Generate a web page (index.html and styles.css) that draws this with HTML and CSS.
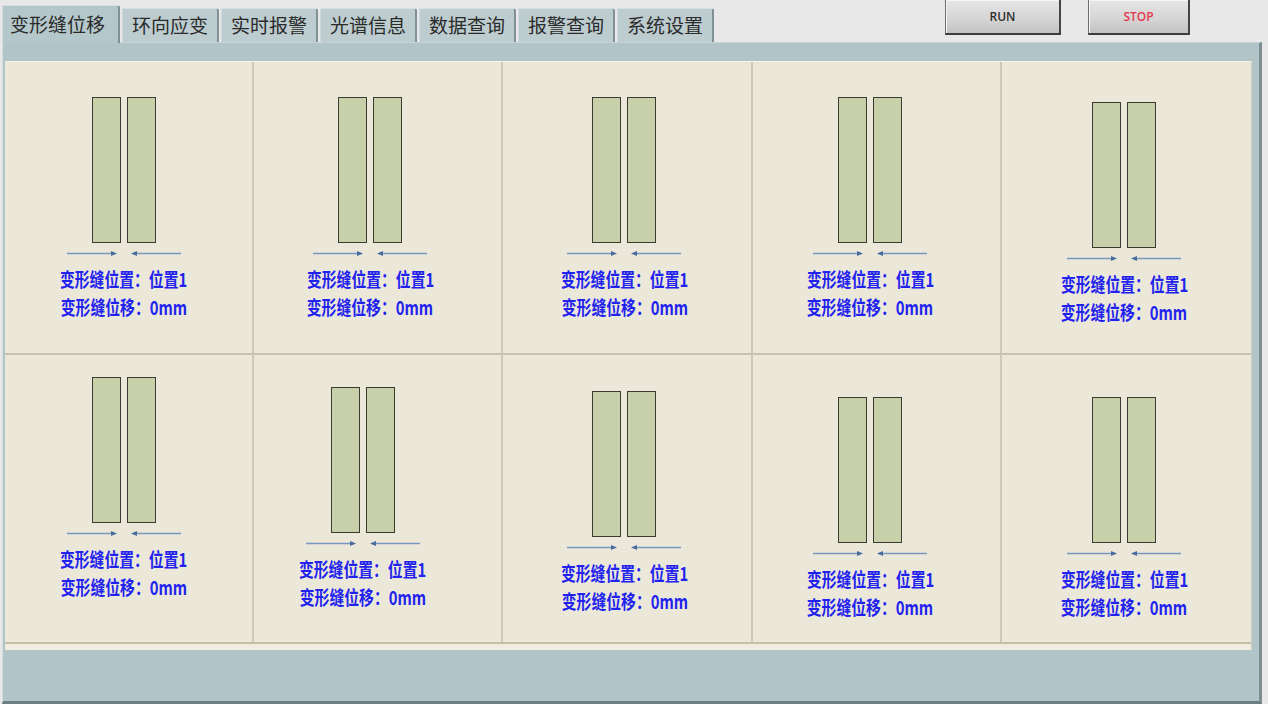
FILE: index.html
```html
<!DOCTYPE html>
<html lang="zh-CN">
<head>
    <meta charset="UTF-8">
    <meta name="viewport" content="width=device-width, initial-scale=1.0">
    <title>变形缝位移</title>
    <link rel="stylesheet" href="styles.css">
</head>
<body>
<!--  tab strip and run / stop keys  -->
<div class="header">
  <div class="tabs">
    <span class="tab active">变形缝位移</span>
    <span class="tab">环向应变</span>
    <span class="tab">实时报警</span>
    <span class="tab">光谱信息</span>
    <span class="tab">数据查询</span>
    <span class="tab">报警查询</span>
    <span class="tab">系统设置</span>
  </div>
  <div class="controls">
    <span class="btn run">RUN</span>
    <span class="btn stop">STOP</span>
  </div>
</div>

<div class="panel">
  <div class="board">
    <div class="grid">
<!--  first row of joints  -->
      <div class="joint c1 top">
        <div class="bars"><span class="bar"></span><span class="bar"></span></div>
        <svg class="arrows" width="114" height="9" viewBox="0 0 114 9"><line x1="0" y1="4.5" x2="48" y2="4.5"/><polygon points="44,2 50,4.5 44,7"/><line x1="66" y1="4.5" x2="114" y2="4.5"/><polygon points="70,2 64,4.5 70,7"/></svg>
        <div class="label">变形缝位置：位置1</div>
        <div class="label">变形缝位移：0mm</div>
      </div>
      <div class="joint c2 top">
        <div class="bars"><span class="bar"></span><span class="bar"></span></div>
        <svg class="arrows" width="114" height="9" viewBox="0 0 114 9"><line x1="0" y1="4.5" x2="48" y2="4.5"/><polygon points="44,2 50,4.5 44,7"/><line x1="66" y1="4.5" x2="114" y2="4.5"/><polygon points="70,2 64,4.5 70,7"/></svg>
        <div class="label">变形缝位置：位置1</div>
        <div class="label">变形缝位移：0mm</div>
      </div>
      <div class="joint c3 top">
        <div class="bars"><span class="bar"></span><span class="bar"></span></div>
        <svg class="arrows" width="114" height="9" viewBox="0 0 114 9"><line x1="0" y1="4.5" x2="48" y2="4.5"/><polygon points="44,2 50,4.5 44,7"/><line x1="66" y1="4.5" x2="114" y2="4.5"/><polygon points="70,2 64,4.5 70,7"/></svg>
        <div class="label">变形缝位置：位置1</div>
        <div class="label">变形缝位移：0mm</div>
      </div>
      <div class="joint c4 top">
        <div class="bars"><span class="bar"></span><span class="bar"></span></div>
        <svg class="arrows" width="114" height="9" viewBox="0 0 114 9"><line x1="0" y1="4.5" x2="48" y2="4.5"/><polygon points="44,2 50,4.5 44,7"/><line x1="66" y1="4.5" x2="114" y2="4.5"/><polygon points="70,2 64,4.5 70,7"/></svg>
        <div class="label">变形缝位置：位置1</div>
        <div class="label">变形缝位移：0mm</div>
      </div>
      <div class="joint c5 top low">
        <div class="bars"><span class="bar"></span><span class="bar"></span></div>
        <svg class="arrows" width="114" height="9" viewBox="0 0 114 9"><line x1="0" y1="4.5" x2="48" y2="4.5"/><polygon points="44,2 50,4.5 44,7"/><line x1="66" y1="4.5" x2="114" y2="4.5"/><polygon points="70,2 64,4.5 70,7"/></svg>
        <div class="label">变形缝位置：位置1</div>
        <div class="label">变形缝位移：0mm</div>
      </div>
<!--  second row of joints  -->
      <div class="joint c1 d22">
        <div class="bars"><span class="bar"></span><span class="bar"></span></div>
        <svg class="arrows" width="114" height="9" viewBox="0 0 114 9"><line x1="0" y1="4.5" x2="48" y2="4.5"/><polygon points="44,2 50,4.5 44,7"/><line x1="66" y1="4.5" x2="114" y2="4.5"/><polygon points="70,2 64,4.5 70,7"/></svg>
        <div class="label">变形缝位置：位置1</div>
        <div class="label">变形缝位移：0mm</div>
      </div>
      <div class="joint c2 wide d32">
        <div class="bars"><span class="bar"></span><span class="bar"></span></div>
        <svg class="arrows" width="114" height="9" viewBox="0 0 114 9"><line x1="0" y1="4.5" x2="48" y2="4.5"/><polygon points="44,2 50,4.5 44,7"/><line x1="66" y1="4.5" x2="114" y2="4.5"/><polygon points="70,2 64,4.5 70,7"/></svg>
        <div class="label">变形缝位置：位置1</div>
        <div class="label">变形缝位移：0mm</div>
      </div>
      <div class="joint c3 d36">
        <div class="bars"><span class="bar"></span><span class="bar"></span></div>
        <svg class="arrows" width="114" height="9" viewBox="0 0 114 9"><line x1="0" y1="4.5" x2="48" y2="4.5"/><polygon points="44,2 50,4.5 44,7"/><line x1="66" y1="4.5" x2="114" y2="4.5"/><polygon points="70,2 64,4.5 70,7"/></svg>
        <div class="label">变形缝位置：位置1</div>
        <div class="label">变形缝位移：0mm</div>
      </div>
      <div class="joint c4 d42">
        <div class="bars"><span class="bar"></span><span class="bar"></span></div>
        <svg class="arrows" width="114" height="9" viewBox="0 0 114 9"><line x1="0" y1="4.5" x2="48" y2="4.5"/><polygon points="44,2 50,4.5 44,7"/><line x1="66" y1="4.5" x2="114" y2="4.5"/><polygon points="70,2 64,4.5 70,7"/></svg>
        <div class="label">变形缝位置：位置1</div>
        <div class="label">变形缝位移：0mm</div>
      </div>
      <div class="joint c5 d42">
        <div class="bars"><span class="bar"></span><span class="bar"></span></div>
        <svg class="arrows" width="114" height="9" viewBox="0 0 114 9"><line x1="0" y1="4.5" x2="48" y2="4.5"/><polygon points="44,2 50,4.5 44,7"/><line x1="66" y1="4.5" x2="114" y2="4.5"/><polygon points="70,2 64,4.5 70,7"/></svg>
        <div class="label">变形缝位置：位置1</div>
        <div class="label">变形缝位移：0mm</div>
      </div>
    </div>
  </div>
</div>
</body>
</html>
```

FILE: styles.css
```css
body {
margin:0;
padding:0;
height:704px;
overflow:hidden;
background:#e9e8e8;
font-family:"Noto Sans CJK SC", "Liberation Sans", sans-serif;
}

/* top strip: tabs on the left, keys on the right */
.header {
display:flex;
justify-content:space-between;
height:42px;
padding-right:78px;
}
.tabs {
display:flex;
align-items:flex-end;
align-self:flex-end;
padding-left:2px;
}
.tab {
box-sizing:border-box;
width:97px;
height:34px;
margin-right:2px;
background:#bccccf;
border-top:1px solid #d6e0e2;
border-left:1px solid #d0dadd;
border-right:2px solid #7f9195;
border-top-right-radius:3px;
font-size:19px;
line-height:32px;
text-align:center;
color:#2a2a2a;
}
/* selected tab runs into the panel */
.tab.active {
position:relative;
z-index:1;
width:118px;
height:38px;
margin-bottom:-1px;
background:#b4c7ca;
line-height:36px;
text-align:left;
padding-left:7px;
}

.controls {
display:flex;
gap:27px;
align-self:flex-start;
margin-top:-1px;
}
.btn {
box-sizing:border-box;
width:116px;
height:36px;
background:linear-gradient(#e6e6e6, #d4d4d4 60%, #c2c2c2);
border:1px solid #6c6c6c;
border-right:2px solid #444;
border-bottom:2px solid #3c3c3c;
box-shadow:inset 1px 1px #f6f6f6;
font:600 12px "Open Sans", "Liberation Sans", sans-serif;
line-height:34px;
text-align:center;
color:#2e2e2e;
}
.btn.stop {
width:102px;
color:#e5384a;
}

/* blue-grey tab page */
.panel {
box-sizing:border-box;
width:1260px;
height:662px;
margin-left:2px;
padding:18px 7px 0 2px;
background:#b1c4c7;
border-top:1px solid #c6d5d8;
border-left:1px solid #d4dfe1;
border-right:3px solid #7d8e92;
border-bottom:3px solid #6e7f83;
}
.board {
box-sizing:border-box;
height:589px;
padding-bottom:6px;
background:#f0ecdf;
border-top:1px solid #f7f4ea;
border-right:1px solid #d3cebb;
}
.grid {
display:grid;
grid-template-columns:repeat(5, 1fr);
grid-template-rows:293px 287px;
background:#ece8d9;
border-bottom:2px solid #c8bda5;
}

/* one expansion joint: two slabs, arrows, readings */
.joint {
box-sizing:border-box;
display:flex;
flex-direction:column;
align-items:center;
border-right:2px solid #cdc9b9;
}
.joint.c5 { border-right:none; }
.joint.top { border-bottom:2px solid #c6c2b2; padding-top:35px; }
.joint.top.low { padding-top:40px; }
.joint.d22 { padding-top:22px; }
.joint.d32 { padding-top:32px; }
.joint.d36 { padding-top:36px; }
.joint.d42 { padding-top:42px; }

/* nudge each drawing a little left of centre */
.joint.c1 { padding-right:9px; }
.joint.c2 { padding-right:15px; }
.joint.c2.wide { padding-right:30px; }
.joint.c3 { padding-right:5px; }
.joint.c4 { padding-right:12px; }
.joint.c5 { padding-right:4px; }

.bars {
display:flex;
gap:6px;
}
.bar {
width:27px;
height:144px;
background:#c8d0a9;
border:1px solid #3b3b33;
}
.arrows {
display:block;
margin-top:6px;
}
.arrows line {
stroke:#7896c2;
stroke-width:1.3;
}
.arrows polygon {
fill:#4a6c9e;
}
.label {
font-size:19px;
font-weight:bold;
line-height:28px;
color:#2222ee;
white-space:nowrap;
transform:scaleX(0.78);
}
.arrows + .label { margin-top:7px; }
```
